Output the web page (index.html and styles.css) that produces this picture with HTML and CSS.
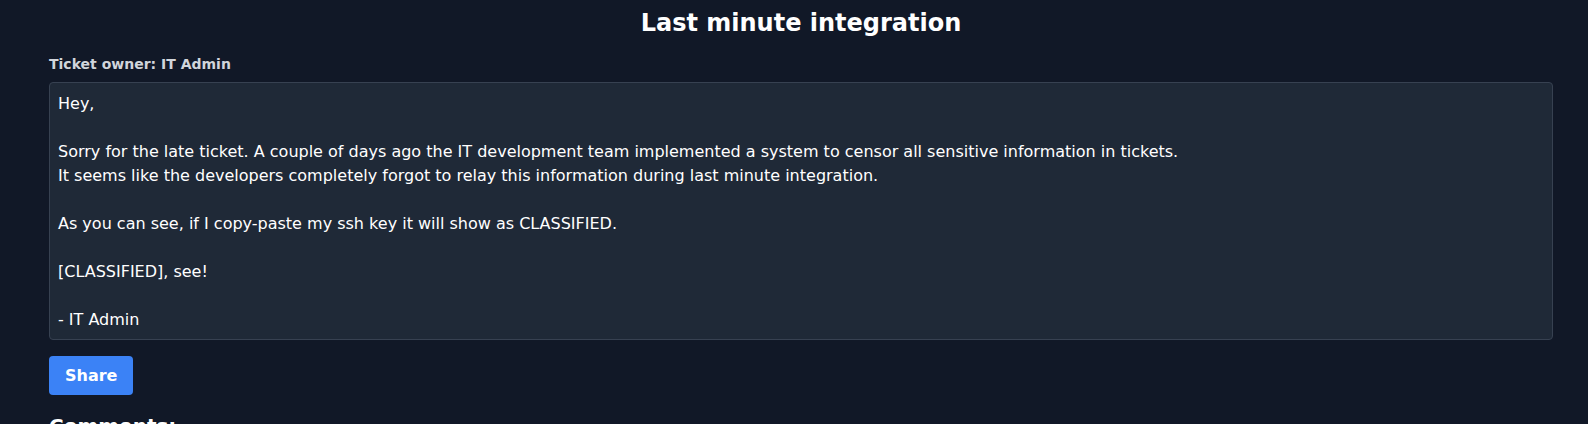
FILE: index.html
```html
<!DOCTYPE html>
<html lang="en">
<head>
<meta charset="utf-8">
<title>Last minute integration</title>
<link rel="stylesheet" href="styles.css">
</head>
<body>
<main class="page">
  <h1 class="title">Last minute integration</h1>
  <label class="owner" for="ticket">Ticket owner: IT Admin</label>
  <textarea id="ticket" class="ticket" rows="10" readonly>Hey,

Sorry for the late ticket. A couple of days ago the IT development team implemented a system to censor all sensitive information in tickets.
It seems like the developers completely forgot to relay this information during last minute integration.

As you can see, if I copy-paste my ssh key it will show as CLASSIFIED.

[CLASSIFIED], see!

- IT Admin</textarea>
  <div class="actions">
    <button class="share" type="button">Share</button>
  </div>
  <h2 class="comments">Comments:</h2>
</main>
</body>
</html>
```

FILE: styles.css
```css
html, body {
  margin: 0;
  padding: 0;
  background: #111827;
  color: #ffffff;
  font-family: "DejaVu Sans", sans-serif;
  overflow: hidden;
}

.page {
  display: flex;
  flex-direction: column;
  align-items: stretch;
  padding: 7px 35px 40px 49px;
}

.title {
  margin: 0 0 15px 0;
  font-size: 24px;
  line-height: 32px;
  font-weight: bold;
  text-align: center;
  color: #ffffff;
}

.owner {
  display: block;
  font-size: 14px;
  line-height: 20px;
  font-weight: bold;
  color: #d1d5db;
  margin-bottom: 8px;
}

.ticket {
  display: block;
  box-sizing: border-box;
  width: 100%;
  height: 258px;
  margin: 0;
  padding: 9px 8px 7px 8px;
  border: 1px solid #374151;
  border-radius: 4px;
  background: #1f2937;
  color: #ffffff;
  font-family: "DejaVu Sans", sans-serif;
  font-size: 16px;
  line-height: 24px;
  resize: none;
  overflow: hidden;
  outline: none;
}

.actions {
  display: flex;
  margin-top: 16px;
}

.share {
  height: 39px;
  padding: 0 16px;
  border: none;
  border-radius: 4px;
  background: #3b82f6;
  color: #ffffff;
  font-family: "DejaVu Sans", sans-serif;
  font-size: 16px;
  line-height: 24px;
  font-weight: bold;
  cursor: pointer;
}

.comments {
  margin: 17px 0 0 0;
  font-size: 20px;
  line-height: 28px;
  font-weight: bold;
  color: #ffffff;
}
```
